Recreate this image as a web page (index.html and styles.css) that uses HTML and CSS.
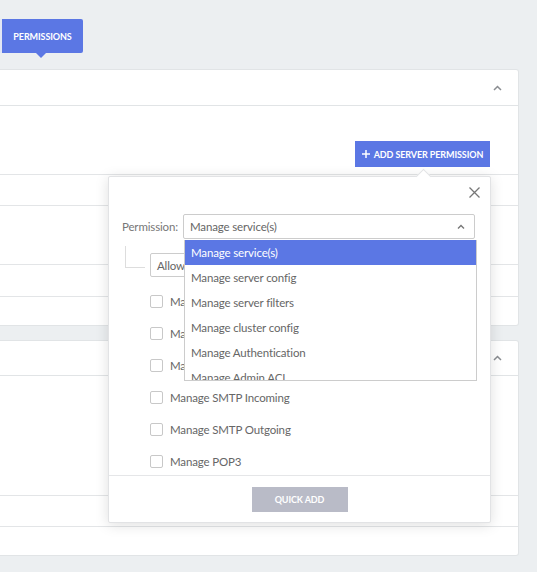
FILE: index.html
```html
<!DOCTYPE html>
<html lang="en">

<head>
    <meta charset="UTF-8">
    <title>Permissions</title>
    <link rel="stylesheet" href="styles.css">
</head>

<body>
    <div class="page">
        <div class="tabs">
            <span class="tab-edge"></span>
            <a class="tab active">Permissions</a>
        </div>

        <!-- server permissions -->
        <div class="card">
            <div class="card-head">
                <svg class="chev" width="9" height="6" viewBox="0 0 9 6"><polyline points="1,5 4.5,1.5 8,5" fill="none" stroke="#8a8d91" stroke-width="1.5"/></svg>
            </div>
            <div class="card-body">
                <div class="toolbar">
                    <button class="btn-primary">
                        <svg width="8" height="8" viewBox="0 0 8 8"><path d="M4 0v8M0 4h8" stroke="#fff" stroke-width="1.5"/></svg>
                        Add server permission
                    </button>
                </div>
                <div class="row r1"></div>
                <div class="row r2"></div>
                <div class="row r3"></div>
                <div class="row r4"></div>
            </div>
        </div>

        <div class="card card-second">
            <div class="card-head head-second">
                <svg class="chev" width="9" height="6" viewBox="0 0 9 6"><polyline points="1,5 4.5,1.5 8,5" fill="none" stroke="#8a8d91" stroke-width="1.5"/></svg>
            </div>
            <div class="row s1"></div>
            <div class="row s2"></div>
            <div class="row s3"></div>
        </div>

        <!-- quick add popover -->
        <div class="popover">
            <div class="pop-body">
                <div class="pop-head">
                    <svg width="11" height="11" viewBox="0 0 11 11"><path d="M0.5 0.5l10 10M10.5 0.5l-10 10" stroke="#777" stroke-width="1.3"/></svg>
                </div>
                <div class="pop-form">
                    <div class="field">
                        <label>Permission:</label>
                        <div class="select-wrap">
                            <div class="select">
                                <span>Manage service(s)</span>
                                <svg width="8" height="5" viewBox="0 0 8 5"><polyline points="1,4.5 4,1.5 7,4.5" fill="none" stroke="#777" stroke-width="1.4"/></svg>
                            </div>
                            <ul class="options">
                                <li class="selected">Manage service(s)</li>
                                <li>Manage server config</li>
                                <li>Manage server filters</li>
                                <li>Manage cluster config</li>
                                <li>Manage Authentication</li>
                                <li>Manage Admin ACL</li>
                                <li>Manage SMTP Incoming</li>
                            </ul>
                        </div>
                    </div>
                    <div class="tree">
                        <div class="select allow"><span>Allow</span></div>
                        <div class="perm-list">
                            <label class="perm"><span class="box"></span>Manage service(s)</label>
                            <label class="perm"><span class="box"></span>Manage server config</label>
                            <label class="perm"><span class="box"></span>Manage server filters</label>
                            <label class="perm"><span class="box"></span>Manage SMTP Incoming</label>
                            <label class="perm"><span class="box"></span>Manage SMTP Outgoing</label>
                            <label class="perm"><span class="box"></span>Manage POP3</label>
                            <label class="perm"><span class="box"></span>Manage IMAP</label>
                        </div>
                    </div>
                </div>
            </div>
            <div class="pop-foot">
                <button class="btn-quick">Quick add</button>
            </div>
        </div>
    </div>
</body>

</html>
```

FILE: styles.css
```css
body {
    margin: 0;
    background: #eceff1;
    font-family: Lato, "Open Sans", sans-serif;
    color: #666;
}

.page {
    position: relative;
    padding: 19px 18px 0 0;
}

.tabs {
    display: flex;
    height: 34px;
}

.tab-edge {
    width: 2px;
    background: #e3e7f4;
}

.tab {
    position: relative;
    width: 81px;
    display: flex;
    align-items: center;
    justify-content: center;
    background: #5b77e4;
    color: #fff;
    font-size: 9px;
    font-weight: 700;
    letter-spacing: -0.1px;
    text-transform: uppercase;
    white-space: nowrap;
    border-radius: 0 2px 2px 0;
}

.tab::after {
    content: "";
    position: absolute;
    left: 34px;
    bottom: -5px;
    border-left: 5px solid transparent;
    border-right: 5px solid transparent;
    border-top: 5px solid #5b77e4;
}

.card {
    margin-top: 16px;
    background: #fff;
    border: 1px solid #e1e4e6;
    border-left: none;
    border-radius: 0 3px 3px 0;
}

.card-second {
    margin-top: 14px;
}

.card-head {
    height: 35px;
    border-bottom: 1px solid #e1e4e6;
    display: flex;
    align-items: center;
    justify-content: flex-end;
    padding-right: 16px;
}

.head-second {
    height: 34px;
}

.toolbar {
    padding: 35px 28px 0 0;
    display: flex;
    justify-content: flex-end;
    margin-bottom: 7px;
}

.btn-primary {
    height: 26px;
    width: 135px;
    border: none;
    background: #5b77e4;
    color: #fff;
    font-family: inherit;
    font-size: 9px;
    font-weight: 700;
    letter-spacing: -0.1px;
    text-transform: uppercase;
    white-space: nowrap;
    display: flex;
    align-items: center;
    justify-content: center;
    gap: 4px;
    padding: 0;
}

.row {
    box-sizing: border-box;
    border-top: 1px solid #e3e5e7;
}

.r1 { height: 31px; }
.r2 { height: 59px; }
.r3 { height: 32px; }
.r4 { height: 29px; }

.s1 { height: 119px; border-top: none; }
.s2 { height: 31px; }
.s3 { height: 29px; }

.popover {
    position: absolute;
    left: 108px;
    top: 176px;
    width: 383px;
    box-sizing: border-box;
    background: #fff;
    border: 1px solid #e2e3e5;
    border-radius: 2px;
    box-shadow: 0 2px 14px rgba(0, 0, 0, 0.13);
    z-index: 5;
}

.popover::before {
    content: "";
    position: absolute;
    top: -6px;
    left: 309px;
    width: 10px;
    height: 10px;
    background: #fff;
    border-top: 1px solid #e2e3e5;
    border-left: 1px solid #e2e3e5;
    transform: rotate(45deg);
}

.pop-body {
    position: relative;
    height: 298px;
    overflow: hidden;
}

.pop-head {
    display: flex;
    justify-content: flex-end;
    padding: 10px 10px 0 0;
    height: 11px;
}

.pop-form {
    padding: 16px 14px 0 13px;
}

.field {
    display: flex;
    align-items: center;
    font-size: 11.5px;
    letter-spacing: -0.15px;
}

.field label {
    width: 61px;
    color: #777;
}

.select-wrap {
    position: relative;
    width: 292px;
}

.select {
    box-sizing: border-box;
    height: 25px;
    border: 1px solid #ccc;
    border-radius: 2px;
    display: flex;
    align-items: center;
    justify-content: space-between;
    padding: 0 9px 0 6px;
    font-size: 11.5px;
    letter-spacing: -0.15px;
    color: #666;
}

.options {
    position: absolute;
    top: 26px;
    left: 1px;
    width: 293px;
    height: 141px;
    box-sizing: border-box;
    margin: 0;
    padding: 0;
    list-style: none;
    background: #fff;
    border: 1px solid #ccc;
    border-top: none;
    overflow: hidden;
    z-index: 2;
}

.options li {
    height: 25px;
    line-height: 25px;
    padding-left: 6px;
    font-size: 11.5px;
    letter-spacing: -0.15px;
    color: #666;
}

.options .selected {
    background: #5b77e4;
    color: #fff;
}

.tree {
    position: relative;
    margin-top: 14px;
    padding-left: 28px;
}

.tree::before {
    content: "";
    position: absolute;
    left: 3px;
    top: -7px;
    width: 19px;
    height: 21px;
    border-left: 1px solid #ddd;
    border-bottom: 1px solid #ddd;
}

.allow {
    width: 90px;
    height: 24px;
}

.perm-list {
    margin-top: 8px;
}

.perm {
    display: flex;
    align-items: center;
    height: 32px;
    font-size: 11.5px;
    letter-spacing: -0.15px;
    color: #666;
}

.box {
    width: 13px;
    height: 13px;
    box-sizing: border-box;
    border: 1px solid #c8c8c8;
    border-radius: 2px;
    margin-right: 7px;
}

.pop-foot {
    border-top: 1px solid #e5e6e8;
    padding: 11px 0 10px;
    display: flex;
    justify-content: center;
}

.btn-quick {
    width: 96px;
    height: 25px;
    border: none;
    background: #b9bbc7;
    color: #fff;
    font-family: inherit;
    font-size: 9px;
    font-weight: 700;
    letter-spacing: -0.1px;
    text-transform: uppercase;
    padding: 0;
}
```
